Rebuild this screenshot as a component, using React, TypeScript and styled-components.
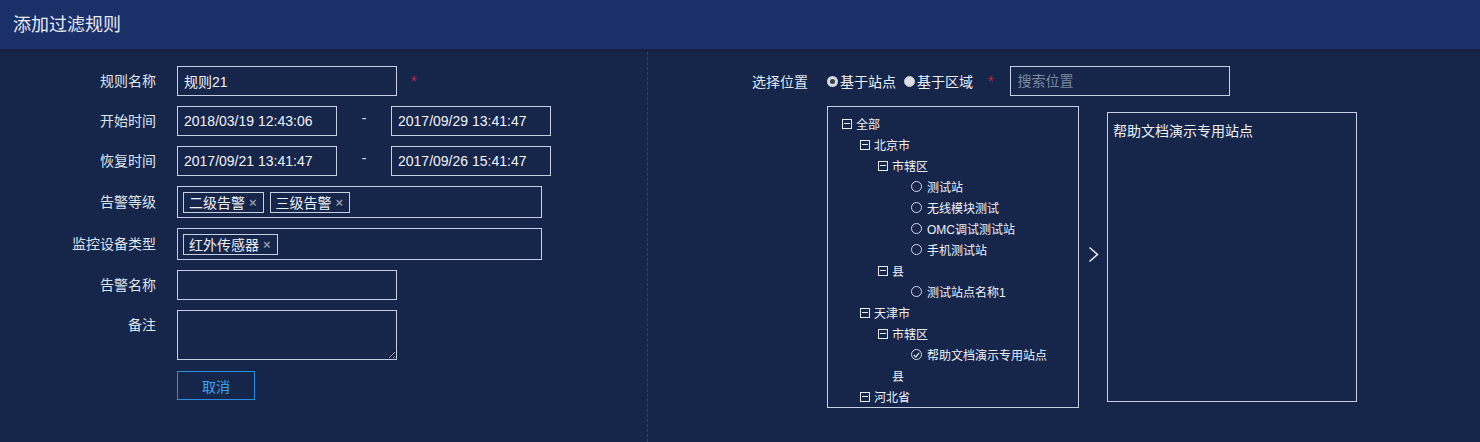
import React from "react";
import styled, { createGlobalStyle } from "styled-components";

const GlobalStyle = createGlobalStyle`
  *, *::before, *::after { box-sizing: border-box; }
  html, body { margin: 0; padding: 0; background: #16254a; }
  body {
    font-family: "Liberation Sans", "Noto Sans CJK SC", sans-serif;
    color: #e1e7f0;
  }
`;

const Page = styled.div`
  width: 1480px;
  height: 442px;
  display: flex;
  flex-direction: column;
  overflow: hidden;
  background: #16254a;
`;

const Header = styled.header`
  height: 52px;
  flex: none;
  background: #1b2f68;
  border-bottom: 3px solid #142141;
  display: flex;
  align-items: center;
  padding: 0 0 4px 13px;
  font-size: 18px;
  color: #e8ecf5;
`;

const Body = styled.main`
  flex: 1;
  display: flex;
`;

const LeftPanel = styled.section`
  width: 648px;
  border-right: 1px dashed #2e4472;
  padding-top: 14px;
  display: flex;
  flex-direction: column;
  gap: 10px;
`;

const Row = styled.div`
  display: flex;
  align-items: flex-start;
`;

const Label = styled.label<{ $h?: number }>`
  width: 156px;
  margin-right: 21px;
  text-align: right;
  font-size: 14px;
  line-height: ${(p) => p.$h ?? 30}px;
  color: #dfe5ef;
  white-space: nowrap;
`;

const TextInput = styled.input<{ $w?: number }>`
  width: ${(p) => p.$w ?? 220}px;
  height: 30px;
  background: transparent;
  border: 1px solid #c5d0e2;
  padding: 0 6px;
  font-family: "Liberation Sans", "Noto Sans CJK SC", sans-serif;
  font-size: 14px;
  color: #f2f5fa;
  outline: none;
  &::placeholder { color: #7d89a0; }
`;

const TextArea = styled.textarea`
  width: 220px;
  height: 50px;
  background: transparent;
  border: 1px solid #c5d0e2;
  padding: 4px 6px;
  font-family: "Liberation Sans", "Noto Sans CJK SC", sans-serif;
  font-size: 14px;
  color: #f2f5fa;
  outline: none;
  display: block;
`;

const Required = styled.span<{ $ml?: number }>`
  color: #d3203f;
  font-size: 14px;
  line-height: 30px;
  margin-left: ${(p) => p.$ml ?? 14}px;
`;

const Dash = styled.span`
  width: 54px;
  text-align: center;
  line-height: 24px;
  font-size: 14px;
  color: #dfe5ef;
`;

const MultiSelect = styled.div`
  width: 365px;
  height: 32px;
  border: 1px solid #c5d0e2;
  display: flex;
  align-items: center;
  gap: 6px;
  padding-left: 5px;
`;

const Tag = styled.span`
  height: 21px;
  border: 1px solid #c5d0e2;
  display: flex;
  align-items: center;
  padding: 0 6px 0 5px;
  font-size: 14px;
  color: #eef2f8;
`;

const TagClose = styled.span`
  margin-left: 4px;
  font-size: 13px;
  font-weight: bold;
  color: #8e97a8;
`;

const Button = styled.button`
  width: 78px;
  height: 29px;
  margin-top: 1px;
  background: transparent;
  border: 1px solid #2c8ee0;
  color: #3ca6f5;
  font-family: "Liberation Sans", "Noto Sans CJK SC", sans-serif;
  font-size: 14px;
  cursor: pointer;
`;

const RightPanel = styled.section`
  flex: 1;
  padding: 14px 0 0 104px;
  display: flex;
  flex-direction: column;
  gap: 10px;
`;

const RightTop = styled.div`
  display: flex;
  align-items: center;
  height: 30px;
`;

const RightLabel = styled.span`
  font-size: 14px;
  color: #dfe5ef;
  margin-right: 19px;
`;

const RadioItem = styled.label<{ $ml?: number }>`
  display: flex;
  align-items: center;
  font-size: 14px;
  color: #eef2f8;
  margin-left: ${(p) => p.$ml ?? 0}px;
`;

const RadioDot = styled.span<{ $on?: boolean }>`
  width: 11px;
  height: 11px;
  border-radius: 50%;
  margin-right: 2px;
  background: ${(p) => (p.$on ? "#3b3f47" : "#dcdfe5")};
  border: ${(p) => (p.$on ? "3px solid #d6d9df" : "1px solid #c9ccd2")};
`;

const SearchWrap = styled.div`
  margin-left: 17px;
`;

const RightBody = styled.div`
  display: flex;
  align-items: flex-start;
  padding-left: 75px;
`;

const TreeBox = styled.div`
  width: 252px;
  height: 302px;
  border: 1px solid #c5d0e2;
  padding: 6px 0 0 14px;
  overflow: hidden;
`;

const TreeRow = styled.div<{ $level: number }>`
  height: 21px;
  display: flex;
  align-items: center;
  padding-left: ${(p) => p.$level * 18}px;
  font-size: 12px;
  color: #eef2f8;
  white-space: nowrap;
`;

const Switcher = styled.span`
  position: relative;
  width: 10px;
  height: 10px;
  border: 1px solid #e6ebf3;
  margin-right: 4px;
  flex: none;
  &::after {
    content: "";
    position: absolute;
    left: 1px;
    right: 1px;
    top: 3px;
    height: 1px;
    background: #e6ebf3;
  }
`;

const SwitcherBlank = styled.span`
  width: 10px;
  margin-right: 4px;
  flex: none;
`;

const LeafCircle = styled.span`
  width: 11px;
  height: 11px;
  border-radius: 50%;
  border: 1.5px solid #d3d9e3;
  margin: 0 5px 0 1px;
  flex: none;
  display: flex;
  align-items: center;
  justify-content: center;
`;

const ArrowCol = styled.div`
  width: 28px;
  height: 302px;
  display: flex;
  align-items: center;
  justify-content: center;
  padding-bottom: 6px;
`;

const SelectedBox = styled.div`
  margin-top: 6px;
  width: 250px;
  height: 290px;
  border: 1px solid #c5d0e2;
  padding: 7px 5px;
  font-size: 14px;
  color: #eef2f8;
`;

type Node = { level: number; text: string; kind: "branch" | "leaf" | "blank" | "checked" };

const tree: Node[] = [
  { level: 0, text: "全部", kind: "branch" },
  { level: 1, text: "北京市", kind: "branch" },
  { level: 2, text: "市辖区", kind: "branch" },
  { level: 3, text: "测试站", kind: "leaf" },
  { level: 3, text: "无线模块测试", kind: "leaf" },
  { level: 3, text: "OMC调试测试站", kind: "leaf" },
  { level: 3, text: "手机测试站", kind: "leaf" },
  { level: 2, text: "县", kind: "branch" },
  { level: 3, text: "测试站点名称1", kind: "leaf" },
  { level: 1, text: "天津市", kind: "branch" },
  { level: 2, text: "市辖区", kind: "branch" },
  { level: 3, text: "帮助文档演示专用站点", kind: "checked" },
  { level: 2, text: "县", kind: "blank" },
  { level: 1, text: "河北省", kind: "branch" },
];

function TreeItem({ node }: { node: Node }) {
  return (
    <TreeRow $level={node.level}>
      {node.kind === "branch" ? <Switcher /> : <SwitcherBlank />}
      {node.kind === "leaf" && <LeafCircle />}
      {node.kind === "checked" && (
        <LeafCircle>
          <svg width="7" height="6" viewBox="0 0 7 6">
            <polyline points="0.8,3 2.8,5 6.2,0.8" fill="none" stroke="#d3d9e3" strokeWidth="1.3" />
          </svg>
        </LeafCircle>
      )}
      <span>{node.text}</span>
    </TreeRow>
  );
}

export default function App() {
  return (
    <Page>
      <GlobalStyle />
      <Header>添加过滤规则</Header>
      <Body>
        <LeftPanel>
          <Row>
            <Label>规则名称</Label>
            <TextInput defaultValue="规则21" />
            <Required>*</Required>
          </Row>
          <Row>
            <Label>开始时间</Label>
            <TextInput $w={160} defaultValue="2018/03/19 12:43:06" />
            <Dash>-</Dash>
            <TextInput $w={160} defaultValue="2017/09/29 13:41:47" />
          </Row>
          <Row>
            <Label>恢复时间</Label>
            <TextInput $w={160} defaultValue="2017/09/21 13:41:47" />
            <Dash>-</Dash>
            <TextInput $w={160} defaultValue="2017/09/26 15:41:47" />
          </Row>
          <Row>
            <Label $h={32}>告警等级</Label>
            <MultiSelect>
              <Tag>
                二级告警<TagClose>×</TagClose>
              </Tag>
              <Tag>
                三级告警<TagClose>×</TagClose>
              </Tag>
            </MultiSelect>
          </Row>
          <Row>
            <Label $h={32}>监控设备类型</Label>
            <MultiSelect>
              <Tag>
                红外传感器<TagClose>×</TagClose>
              </Tag>
            </MultiSelect>
          </Row>
          <Row>
            <Label>告警名称</Label>
            <TextInput />
          </Row>
          <Row>
            <Label>备注</Label>
            <TextArea />
          </Row>
          <Row>
            <Label />
            <Button>取消</Button>
          </Row>
        </LeftPanel>
        <RightPanel>
          <RightTop>
            <RightLabel>选择位置</RightLabel>
            <RadioItem>
              <RadioDot $on />
              基于站点
            </RadioItem>
            <RadioItem $ml={8}>
              <RadioDot />
              基于区域
            </RadioItem>
            <Required $ml={15}>*</Required>
            <SearchWrap>
              <TextInput placeholder="搜索位置" />
            </SearchWrap>
          </RightTop>
          <RightBody>
            <TreeBox>
              {tree.map((n, i) => (
                <TreeItem key={i} node={n} />
              ))}
            </TreeBox>
            <ArrowCol>
              <svg width="11" height="17" viewBox="0 0 11 17">
                <polyline points="1.5,1.5 9.5,8.5 1.5,15.5" fill="none" stroke="#e6ebf3" strokeWidth="1.6" />
              </svg>
            </ArrowCol>
            <SelectedBox>帮助文档演示专用站点</SelectedBox>
          </RightBody>
        </RightPanel>
      </Body>
    </Page>
  );
}
